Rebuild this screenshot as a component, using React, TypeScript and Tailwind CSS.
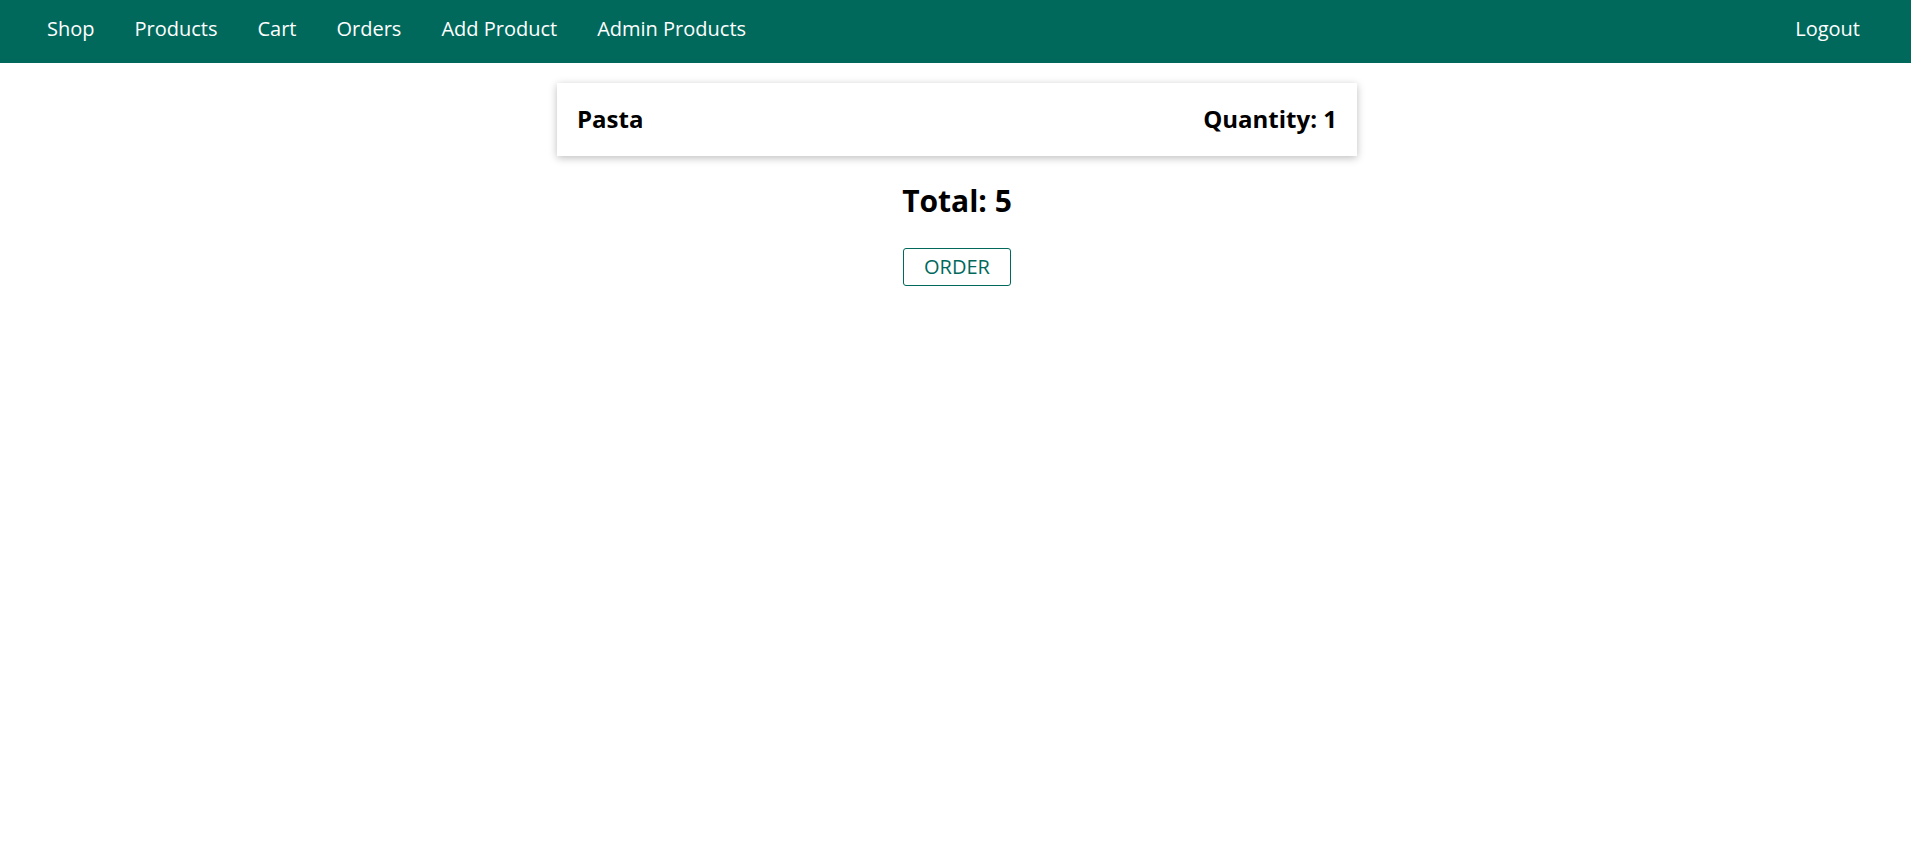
const navItems = ["Shop", "Products", "Cart", "Orders", "Add Product", "Admin Products"];

const CartItem = ({ title, quantity }: { title: string; quantity: number }) => (
	<li className="flex items-center justify-between bg-white px-5 py-5 shadow-[0_2px_8px_rgba(0,0,0,0.26)]">
		<h1 className="text-[24px] font-bold leading-[1.362]">{title}</h1>
		<h2 className="text-[24px] font-bold leading-[1.362]">Quantity: {quantity}</h2>
	</li>
);

export default function App() {
	return (
		<div className="min-h-screen bg-white text-black font-['Open_Sans',sans-serif]">
			<header className="flex h-[63px] items-center justify-between bg-[#00695c] pb-[6px] pl-[47px] pr-[51px] text-[20px] text-white">
				<nav>
					<ul className="flex items-center gap-10">
						{navItems.map((item) => (
							<li key={item}>
								<a href="/">{item}</a>
							</li>
						))}
					</ul>
				</nav>
				<a href="/">Logout</a>
			</header>

			<main className="flex flex-col items-center pl-[3px]">
				<ul className="mt-5 w-[800px]">
					<CartItem title="Pasta" quantity={1} />
				</ul>
				<h2 className="mt-[25px] text-[30px] font-bold leading-[1.362]">Total: 5</h2>
				<button
					type="button"
					className="mt-[26px] flex h-[38px] items-center rounded-[3px] border border-[#00695c] px-[20px] text-[20px] text-[#00695c]"
				>
					ORDER
				</button>
			</main>
		</div>
	);
}
